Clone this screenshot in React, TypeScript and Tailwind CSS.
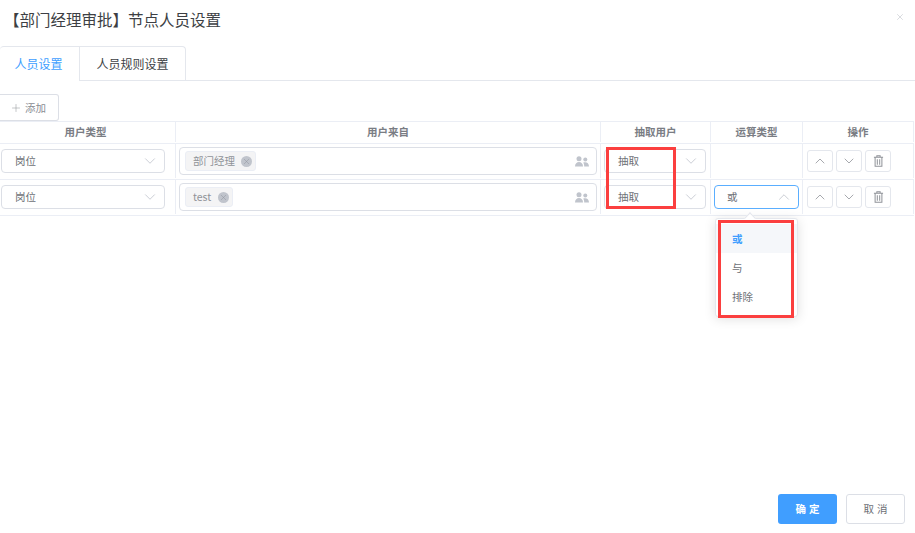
import { ChevronDown, ChevronUp, Plus, X } from "lucide-react";

const COLS = "grid grid-cols-[176px_425px_110px_92px_111px] w-[914px]";

function Select({ label, open = false, className = "" }: { label: string; open?: boolean; className?: string }) {
  return (
    <div
      className={`h-6 flex items-center justify-between rounded-[4px] border bg-white text-[10.500px] text-[#6d7076] ${
        open ? "border-[#5aaeff]" : "border-[#dcdfe6]"
      } ${className}`}
    >
      <span>{label}</span>
      {open ? (
        <ChevronUp size={18} strokeWidth={1.100} className="text-[#c0c4cc]" />
      ) : (
        <ChevronDown size={18} strokeWidth={1.100} className="text-[#c0c4cc]" />
      )}
    </div>
  );
}

function PeopleIcon() {
  return (
    <svg width="14" height="11" viewBox="0 0 14 11" className="text-[#c0c4cc]" fill="currentColor">
      <circle cx="4" cy="2.800" r="2.500" />
      <path d="M0 10.500c0-3 1.800-4.500 4-4.500s4 1.500 4 4.500z" />
      <circle cx="10.300" cy="3.600" r="2" />
      <path d="M9 6.300c2.800-.5 5 1 5 4.200H9.200c0-1.700-.2-3-1-3.700z" />
    </svg>
  );
}

function TrashIcon() {
  return (
    <svg width="11" height="12" viewBox="0 0 12 13" fill="none" stroke="currentColor" strokeWidth="1.100">
      <path d="M1 2.500h10M4.200 2.500V.8h3.600v1.700M2.300 2.500v9.700h7.400V2.500M4.700 4.500v6M7.300 4.500v6" />
    </svg>
  );
}

function Tag({ label, className = "" }: { label: string; className?: string }) {
  return (
    <div
      className={`h-5 flex items-center rounded-[3px] border border-[#ebeef5] bg-[#f4f4f5] pl-[7px] pr-[3px] text-[10.500px] text-[#909399] ${className}`}
    >
      <span>{label}</span>
      <span className="w-[11px] h-[11px] rounded-full bg-[#c0c4cc] flex items-center justify-center text-[#8b8f97]">
        <X size={9} strokeWidth={1.200} />
      </span>
    </div>
  );
}

function IconButton({ children }: { children: React.ReactNode }) {
  return (
    <div className="w-[26px] h-[22px] flex items-center justify-center rounded-[3px] border border-[#e4e7ed] bg-white text-[#909399]">
      {children}
    </div>
  );
}

function Row({ tag, opType }: { tag: string; opType?: boolean }) {
  return (
    <div className={`${COLS} h-9 pb-[1px] border-b border-[#ebeef5]`}>
      <div className="border-r border-[#ebeef5] pl-[1px] pr-[10px] flex items-center">
        <Select label="岗位" className="w-full pl-[13px] pr-[5px]" />
      </div>
      <div className="border-r border-[#ebeef5] pl-[3px] pr-[3px] flex items-center">
        <div className="w-full h-7 flex items-center justify-between rounded-[4px] border border-[#dcdfe6] pl-[5px] pr-[7px]">
          <Tag label={tag} className={tag === "test" ? "gap-[7px]" : "gap-[6px]"} />
          <PeopleIcon />
        </div>
      </div>
      <div className="border-r border-[#ebeef5] pl-[3px] pr-[4px] flex items-center">
        <Select label="抽取" className="w-full pl-[13px] pr-[5px]" />
      </div>
      <div className="border-r border-[#ebeef5] pl-[3px] pr-[3px] flex items-center">
        {opType && <Select label="或" open className="w-full pl-[12px] pr-[5px]" />}
      </div>
      <div className="border-r border-[#ebeef5] pl-[4px] flex items-center gap-[3px]">
        <IconButton>
          <ChevronUp size={16} strokeWidth={1.200} />
        </IconButton>
        <IconButton>
          <ChevronDown size={16} strokeWidth={1.200} />
        </IconButton>
        <IconButton>
          <TrashIcon />
        </IconButton>
      </div>
    </div>
  );
}

export default function App() {
  return (
    <div className="relative w-[915px] h-[533px] overflow-hidden bg-white font-['Noto_Sans_CJK_SC','Noto_Sans',sans-serif]">
      <div className="h-[46px] flex items-start justify-between pt-[8px] pl-[4px] pr-[10px]">
        <h1 className="text-[15.500px] leading-[22px] text-[#3d3f44]">【部门经理审批】节点人员设置</h1>
        <X size={10} strokeWidth={1.200} className="mt-[4px] text-[#b4b8c0]" />
      </div>

      <div className="flex h-[35px] border-b border-[#e4e7ed]">
        <div className="w-[80px] h-[35px] flex items-center justify-center rounded-tl-[4px] border-t border-r border-[#e4e7ed] bg-white pr-[2px] text-[12px] text-[#409eff]">
          人员设置
        </div>
        <div className="w-[106px] h-[34px] flex items-center justify-center rounded-tr-[4px] border-t border-r border-[#e4e7ed] text-[12px] text-[#3d3f44]">
          人员规则设置
        </div>
      </div>

      <div className="h-[40px] flex items-end">
        <div className="w-[59px] h-[27px] flex items-center gap-[3px] pl-[10px] rounded-r-[3px] border border-l-0 border-[#dcdfe6] text-[10.500px] text-[#8a8d93]">
          <Plus size={12} strokeWidth={1} />
          <span>添加</span>
        </div>
      </div>

      <div className={`${COLS} h-[23px] pb-[1px] border-y border-[#ebeef5] text-[10.500px] font-bold text-[#7a7d84]`}>
        <div className="border-r border-[#ebeef5] flex items-center justify-center pr-[4px]">用户类型</div>
        <div className="border-r border-[#ebeef5] flex items-center justify-center">用户来自</div>
        <div className="border-r border-[#ebeef5] flex items-center justify-center">抽取用户</div>
        <div className="border-r border-[#ebeef5] flex items-center justify-center">运算类型</div>
        <div className="border-r border-[#ebeef5] flex items-center justify-center">操作</div>
      </div>
      <Row tag="部门经理" />
      <Row tag="test" opType />

      {/* dropdown of the open select */}
      <div className="absolute left-[715px] top-[218px] w-[83px] h-[99px] rounded-[3px] border border-[#e4e7ed] bg-white py-[5px] shadow-[0_2px_12px_rgba(0,0,0,0.12)] text-[10.500px] text-[#6d7076]">
        <div className="h-[29px] flex items-center pl-[16px] bg-[#f5f7fa] font-bold text-[#409eff]">或</div>
        <div className="h-[29px] flex items-center pl-[16px]">与</div>
        <div className="h-[29px] flex items-center pl-[16px]">排除</div>
      </div>
      <div className="absolute left-[746px] top-[214px] w-2 h-2 rotate-45 border-l border-t border-[#e4e7ed] bg-white" />

      {/* red annotation boxes */}
      <div className="absolute left-[606px] top-[147px] w-[70px] h-[62px] border-[3px] border-[#fb3f3f]" />
      <div className="absolute left-[718px] top-[220px] w-[76px] h-[98px] border-[3px] border-[#fb3f3f]" />

      <div className="absolute right-[10px] bottom-[9px] flex gap-[9px] text-[10.500px]">
        <div className="w-[59px] h-[30px] flex items-center justify-center rounded-[3px] bg-[#409eff] pl-[3px] font-bold tracking-[3px] text-white">
          确定
        </div>
        <div className="w-[59px] h-[30px] flex items-center justify-center rounded-[3px] border border-[#dcdfe6] pl-[3px] tracking-[3px] text-[#6d7076]">
          取消
        </div>
      </div>
    </div>
  );
}
